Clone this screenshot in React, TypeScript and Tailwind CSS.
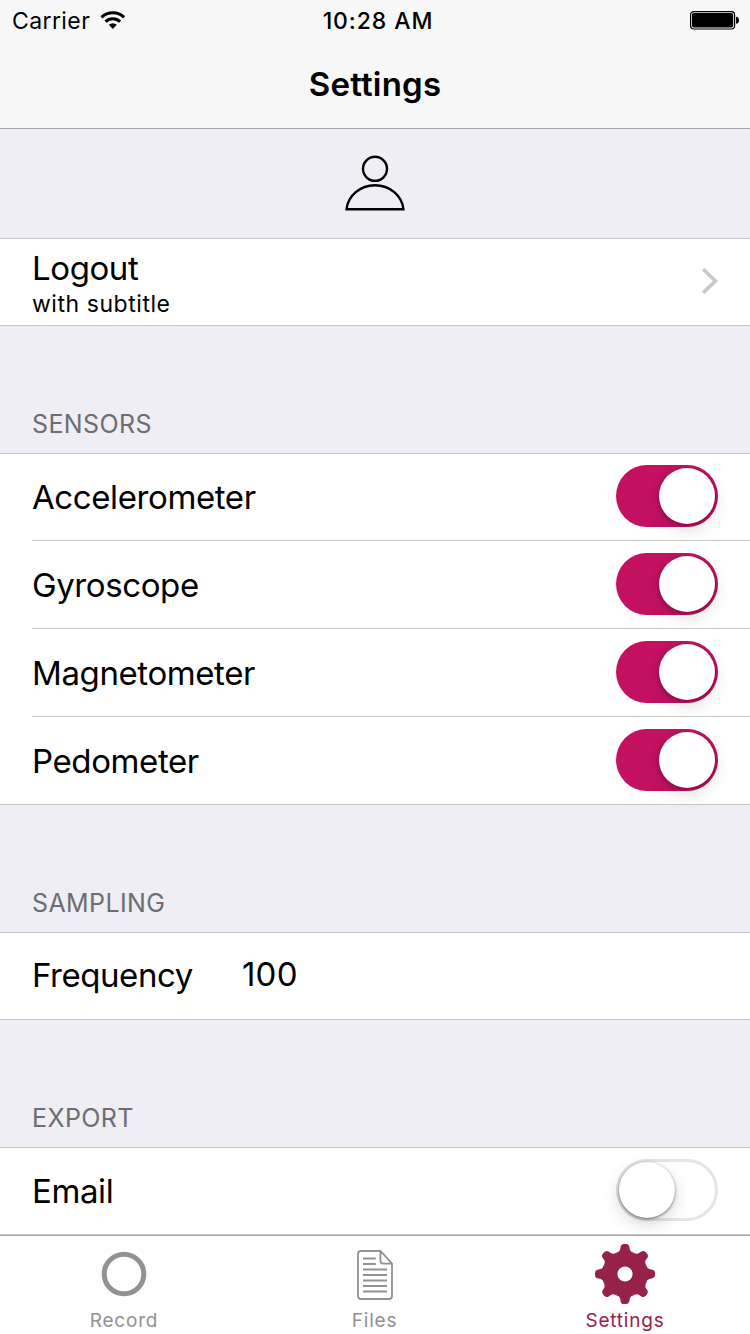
import React, { useState } from "react";

function Wifi() {
  return (
    <svg width="26" height="20" viewBox="0 0 26 20" fill="none" stroke="#000" strokeWidth="3.1">
      <path d="M1.5 7.3A16.2 16.2 0 0 1 24.1 7.3" />
      <path d="M5.5 11.7A10.4 10.4 0 0 1 20.1 11.7" />
      <path d="M8.8 14.8A5.8 5.8 0 0 1 16.8 14.8L12.8 19Z" fill="#000" stroke="none" />
    </svg>
  );
}

function Battery() {
  return (
    <svg width="50" height="20" viewBox="0 0 50 20">
      <rect x="0.6" y="1.6" width="44" height="17.4" rx="3.2" fill="none" stroke="#000" strokeWidth="1.2" />
      <rect x="2" y="3" width="41.2" height="14.6" rx="1.8" fill="#000" />
      <path d="M46 6.8Q49 7.2 49 10.3Q49 13.4 46 13.8Z" fill="#000" />
    </svg>
  );
}

function Person() {
  return (
    <svg width="60" height="56" viewBox="0 0 60 56" fill="none" stroke="#000" strokeWidth="2.4">
      <circle cx="30" cy="13.8" r="12" />
      <path d="M1.6 54.2A28.5 26.2 0 0 1 58.4 54.2Z" />
    </svg>
  );
}

function Gear() {
  return (
    <svg width="60" height="60" viewBox="-30 -30 60 60" fill="#96224a">
      <circle r="21.5" />
      {[0, 45, 90, 135, 180, 225, 270, 315].map((angle) => (
        <path
          key={angle}
          transform={`rotate(${angle})`}
          d="M0 0L-8.9 -21.2Q-5.6 -21.9 -4.9 -24.3L-4.3 -27.4Q-3.8 -30 -1 -30H1Q3.8 -30 4.3 -27.4L4.9 -24.3Q5.6 -21.9 8.9 -21.2Z"
        />
      ))}
      <circle r="7.6" fill="#fefefe" />
    </svg>
  );
}

function FileIcon() {
  return (
    <svg width="36" height="50" viewBox="0 0 36 50" fill="none" stroke="#929292" strokeWidth="1.8">
      <path d="M23.6 1H4Q1 1 1 4V46Q1 49 4 49H32Q35 49 35 46V13.6ZM23.4 1V10.6Q23.4 13.6 26.4 13.6H35" strokeLinejoin="round" />
      <path d="M6 8.5H18.8M6 14H18.8M6 19.5H30M6 25H30M6 30.5H30M6 36H30M6 41.5H30" />
    </svg>
  );
}

function Toggle({ initial }: { initial: boolean }) {
  const [on, setOn] = useState(initial);
  return (
    <button
      role="switch"
      aria-checked={on}
      onClick={() => setOn(!on)}
      className={`mb-[2px] flex h-[62px] w-[102px] items-center rounded-full ${
        on ? "justify-end bg-[#c41162] pr-[3px]" : "justify-start border-[3px] border-[#e5e5e5] bg-white"
      }`}
    >
      <span
        className={`size-14 rounded-full bg-white ${
          on
            ? "shadow-[0_6px_16px_rgba(0,0,0,0.14),0_1px_4px_rgba(0,0,0,0.3)]"
            : "shadow-[0_6px_16px_rgba(0,0,0,0.16),0_1px_3px_rgba(0,0,0,0.5)]"
        }`}
      />
    </button>
  );
}

function SensorRow({ label, last, first }: { label: string; last?: boolean; first?: boolean }) {
  return (
    <div className="pl-8">
      <div
        className={`flex items-center justify-between pr-8 ${first ? "h-[87px]" : "h-[88px]"} ${
          last ? "" : "border-b border-[#c8c7cc]"
        }`}
      >
        <span className="text-[33px] leading-10 tracking-[-0.4px]">{label}</span>
        <Toggle initial />
      </div>
    </div>
  );
}

function SectionTitle({ children }: { children: React.ReactNode }) {
  return (
    <h2 className="flex items-end pb-[13px] pl-8 text-[25px] leading-8 tracking-[0.4px] text-[#6d6d72]">{children}</h2>
  );
}

export default function App() {
  return (
    <div className="flex h-[1334px] w-[750px] flex-col overflow-hidden bg-[#efeef4] font-['Inter',sans-serif] text-black">
      <header className="h-[129px] shrink-0 border-b border-[#a7a7aa] bg-[#f7f7f7]">
        <div className="grid h-[42px] grid-cols-3 items-center pl-3 pr-[10px]">
          <div className="flex items-center gap-[10px]">
            <span className="text-[23px] tracking-[0.4px]">Carrier</span>
            <div className="pb-[2px]">
              <Wifi />
            </div>
          </div>
          <span className="pl-1 text-center text-[23px] font-medium tracking-[0.9px]">10:28 AM</span>
          <div className="flex justify-end pb-[2px]">
            <Battery />
          </div>
        </div>
        <h1 className="pt-[22px] text-center text-[33px] font-semibold leading-10 tracking-[0.2px]">Settings</h1>
      </header>

      <main className="flex min-h-0 flex-1 flex-col">
        <div className="flex h-[109px] shrink-0 justify-center pt-[26px]">
          <Person />
        </div>
        <div className="flex h-[88px] shrink-0 items-center justify-between border-y border-[#c8c7cc] bg-white px-8">
          <div className="flex flex-col pt-[2px]">
            <span className="text-[33px] leading-10 tracking-[-0.4px]">Logout</span>
            <span className="pt-[1px] text-[23px] leading-[30px] tracking-[0.55px]">with subtitle</span>
          </div>
          <svg className="mb-[2px]" width="17" height="26" viewBox="0 0 17 26" fill="none" stroke="#c7c7cc" strokeWidth="3.6">
            <path d="M2.2 1.3L14.4 13L2.2 24.7" />
          </svg>
        </div>

        <div className="flex h-[127px] shrink-0 flex-col justify-end">
          <SectionTitle>SENSORS</SectionTitle>
        </div>
        <div className="h-[352px] shrink-0 border-y border-[#c8c7cc] bg-white">
          <SensorRow label="Accelerometer" first />
          <SensorRow label="Gyroscope" />
          <SensorRow label="Magnetometer" />
          <SensorRow label="Pedometer" last />
        </div>

        <div className="flex h-[127px] shrink-0 flex-col justify-end">
          <SectionTitle>SAMPLING</SectionTitle>
        </div>
        <div className="flex h-[88px] shrink-0 items-center border-y border-[#c8c7cc] bg-white pb-[2px] pl-8 text-[33px] leading-10">
          <span className="w-[210px] tracking-[-0.45px]">Frequency</span>
          <span className="pb-[2px] tracking-[0.2px]">100</span>
        </div>

        <div className="flex h-[127px] shrink-0 flex-col justify-end">
          <SectionTitle>EXPORT</SectionTitle>
        </div>
        <div className="flex h-[88px] shrink-0 items-center justify-between border-y border-[#c8c7cc] bg-white px-8">
          <span className="text-[33px] leading-10 tracking-[-0.4px]">Email</span>
          <Toggle initial={false} />
        </div>
      </main>

      <nav className="grid h-[99px] shrink-0 grid-cols-3 border-t border-[#a7a7aa] bg-[#fefefe] text-[19px] tracking-[0.8px] text-[#929292]">
        <div className="flex flex-col items-center pr-[2px]">
          <div className="flex h-[71px] items-center pt-[5px]">
            <svg width="46" height="46" viewBox="0 0 46 46" fill="none" stroke="#929292" strokeWidth="5">
              <circle cx="23" cy="23" r="19.8" />
            </svg>
          </div>
          <span className="leading-7">Record</span>
        </div>
        <div className="flex flex-col items-center">
          <div className="flex h-[71px] items-center pt-[7px]">
            <FileIcon />
          </div>
          <span className="pr-[1px] leading-7">Files</span>
        </div>
        <div className="flex flex-col items-center text-[#96224a]">
          <div className="flex h-[71px] items-center pt-[5px]">
            <Gear />
          </div>
          <span className="leading-7">Settings</span>
        </div>
      </nav>
    </div>
  );
}
